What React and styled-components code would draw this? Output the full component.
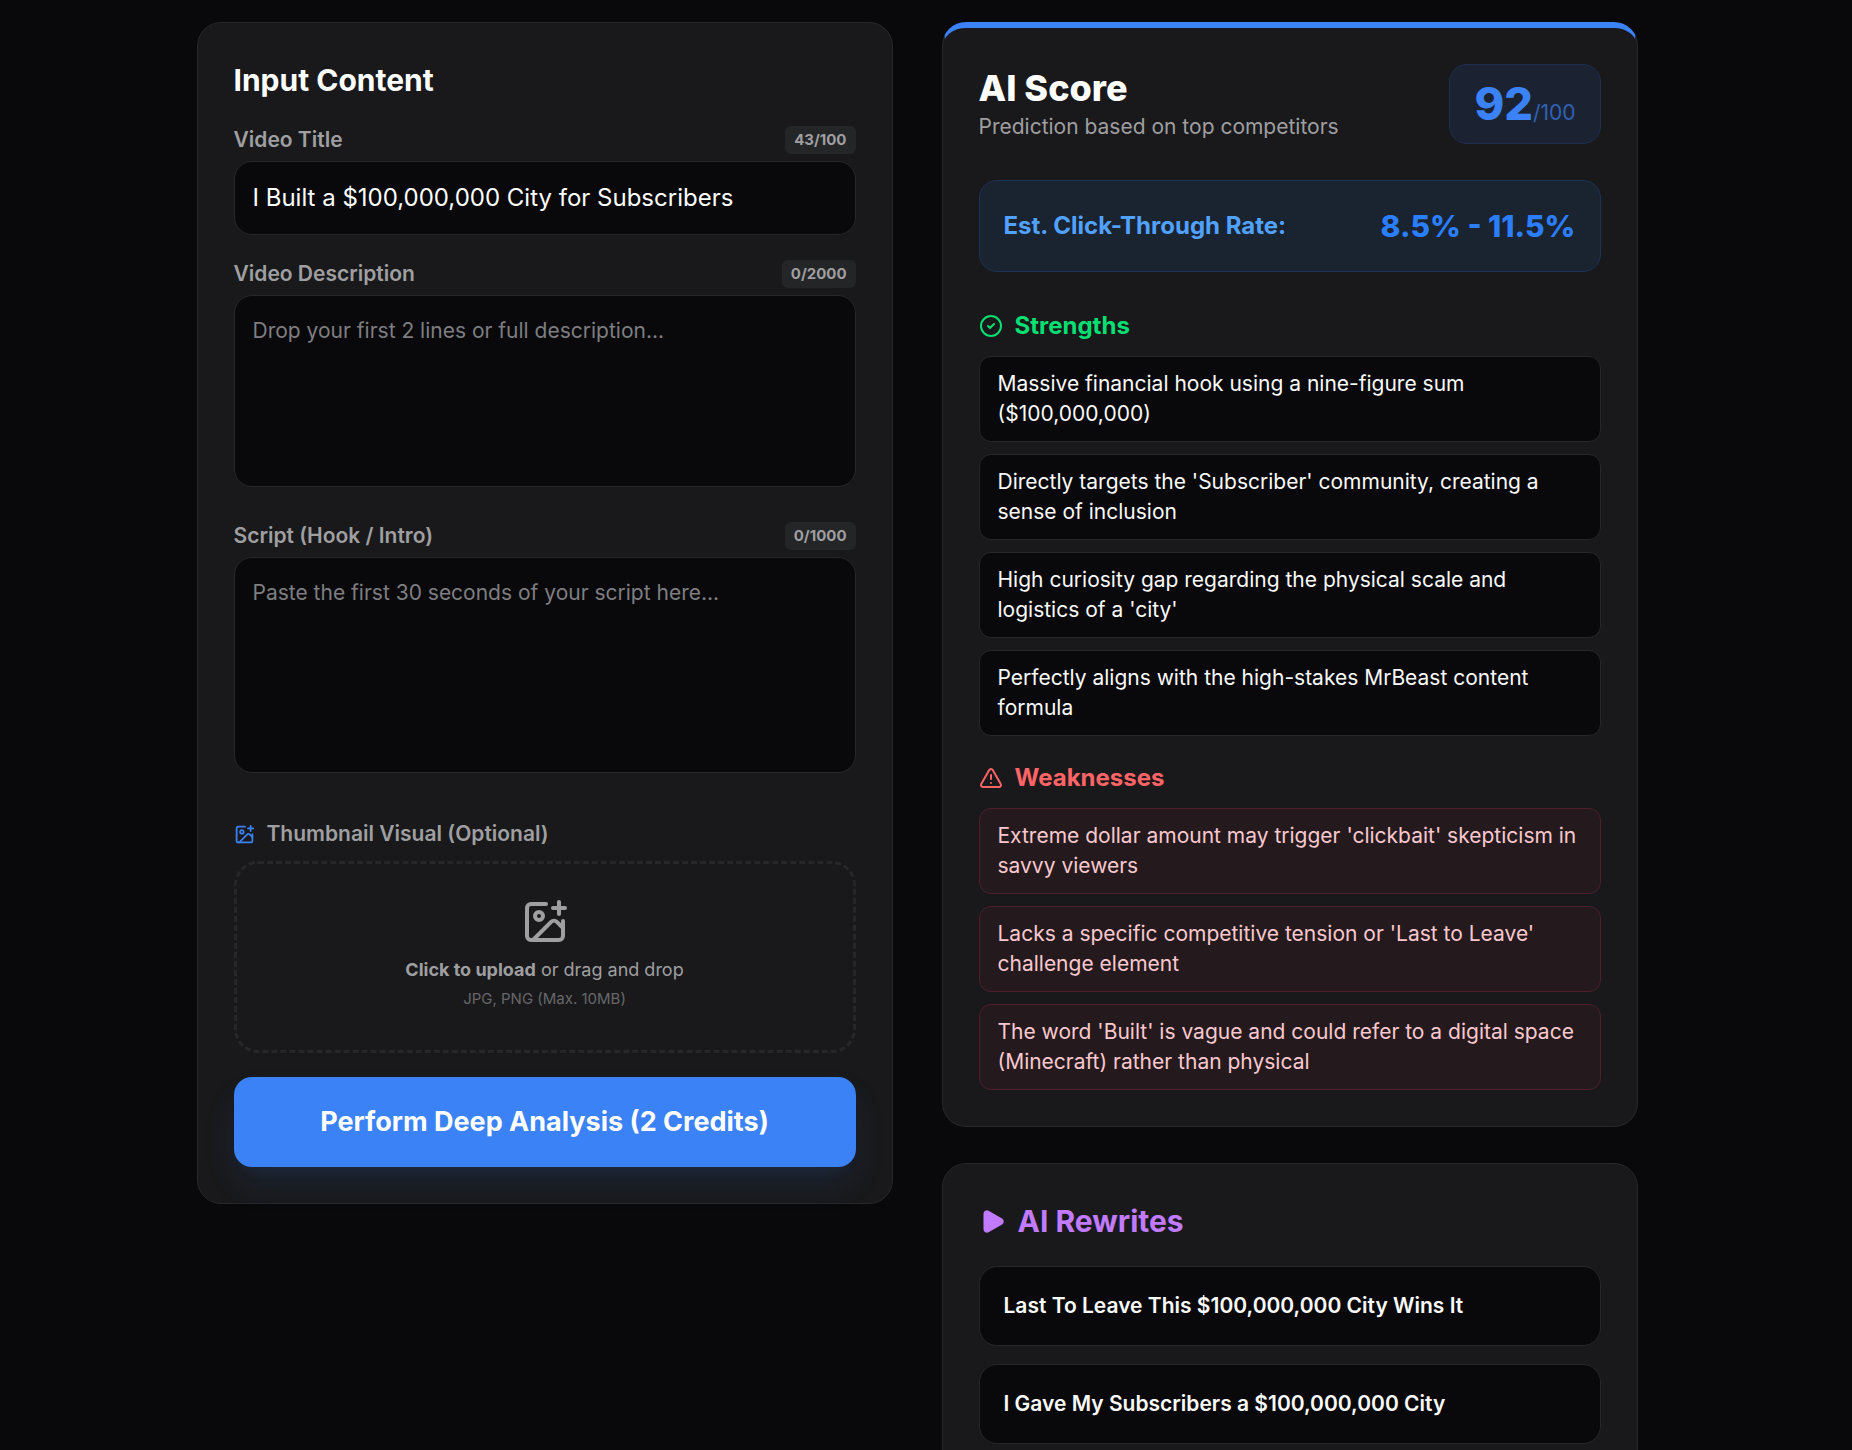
import React, { useState } from "react";
import styled, { createGlobalStyle } from "styled-components";
import { ImagePlus, CircleCheck, TriangleAlert, Play } from "lucide-react";

const Global = createGlobalStyle`
  *, *::before, *::after { box-sizing: border-box; }
  body {
    margin: 0;
    background: #09090b;
    color: #fafafa;
    font-family: Inter, "Liberation Sans", sans-serif;
    font-size: 21px;
    line-height: 30px;
  }
  h1, h2, h3, p, ul { margin: 0; padding: 0; }
  ul { list-style: none; }
  input, textarea, button { font: inherit; }
`;

const Page = styled.main`
  height: 100vh;
  overflow: hidden;
  padding: 22px 18px 0 0;
`;

const Columns = styled.div`
  display: grid;
  grid-template-columns: 1fr 1fr;
  align-items: start;
  gap: 49px;
  max-width: 1441px;
  margin: 0 auto;
`;

const Results = styled.div`
  display: flex;
  flex-direction: column;
  gap: 36px;
`;

const Card = styled.section`
  display: flex;
  flex-direction: column;
  min-width: 0;
  padding: 36px;
  background: #19191b;
  border: 1px solid #27272a;
  border-radius: 24px;
  ${(p) => p.$accent && `border-top: 6px solid ${p.$accent};`}
`;

const CardTitle = styled.h2`
  display: flex;
  align-items: center;
  gap: 12px;
  margin-bottom: 24px;
  font-size: 30px;
  line-height: 42px;
  font-weight: 700;
  color: ${(p) => p.$color || "#ffffff"};
`;

const Field = styled.div`
  display: flex;
  flex-direction: column;
  gap: ${(p) => p.$gap || "6px"};
  margin-bottom: ${(p) => p.$space || "24px"};
`;

const FieldHead = styled.div`
  display: flex;
  align-items: center;
  justify-content: space-between;
`;

const Label = styled.label`
  display: flex;
  align-items: center;
  gap: 12px;
  font-weight: 600;
  color: #9f9fa1;
`;

const Counter = styled.span`
  padding: 3px 9px;
  border-radius: 6px;
  background: #242527;
  color: #9f9fa1;
  font-size: 15px;
  line-height: 22px;
  font-weight: 700;
`;

const TextInput = styled.input`
  width: 100%;
  height: 74px;
  padding: 0 18px 2px;
  background: #09090b;
  border: 1px solid #27272a;
  border-radius: 18px;
  color: #ffffff;
  font-size: 24px;
  outline: none;
`;

const TextArea = styled.textarea`
  display: block;
  width: 100%;
  height: ${(p) => p.$height};
  padding: 20px 18px;
  background: #09090b;
  border: 1px solid #27272a;
  border-radius: 18px;
  color: #ffffff;
  resize: none;
  outline: none;
  &::placeholder { color: #7e7e81; opacity: 1; }
`;

const DropZone = styled.button`
  display: flex;
  flex-direction: column;
  align-items: center;
  width: 100%;
  height: 192px;
  padding: 34px 0 0;
  background: transparent;
  border: 3px dashed #27272a;
  border-radius: 24px;
  color: #9f9fa1;
  cursor: pointer;
`;

const DropText = styled.span`
  margin-top: 10px;
  font-size: 18px;
  line-height: 27px;
`;

const DropHint = styled.span`
  margin-top: 5px;
  font-size: 15px;
  line-height: 22px;
  color: #67676a;
`;

const Submit = styled.button`
  height: 90px;
  border: 0;
  border-radius: 18px;
  background: #3b82f6;
  box-shadow: 0 18px 36px -4px rgba(59, 130, 246, 0.12), 0 12px 15px -9px rgba(59, 130, 246, 0.08);
  color: #ffffff;
  font-size: 27px;
  line-height: 42px;
  font-weight: 700;
  cursor: pointer;
`;

const ScoreHead = styled.header`
  display: flex;
  align-items: center;
  justify-content: space-between;
  margin-bottom: 36px;
`;

const ScoreTitle = styled.h2`
  margin-bottom: 3px;
  font-size: 36px;
  line-height: 42px;
  font-weight: 800;
  color: #ffffff;
`;

const Subtitle = styled.p`
  color: #9f9fa1;
`;

const ScoreBadge = styled.div`
  padding: 12px 24px;
  background: #1b2332;
  border: 1px solid #1e2f52;
  border-radius: 18px;
  color: #3b82f6;
  font-size: 45px;
  line-height: 54px;
  font-weight: 800;
`;

const ScoreMax = styled.span`
  font-size: 21px;
  line-height: 21px;
  font-weight: 400;
  opacity: 0.65;
`;

const RateBox = styled.div`
  display: flex;
  align-items: center;
  justify-content: space-between;
  margin-bottom: 36px;
  padding: 24px;
  background: #1a2330;
  border: 1px solid #1c3358;
  border-radius: 18px;
  line-height: 42px;
`;

const RateLabel = styled.span`
  font-size: 24px;
  font-weight: 700;
  color: #51a2ff;
`;

const RateValue = styled.span`
  font-size: 30px;
  font-weight: 800;
  color: #2b7fff;
`;

const Group = styled.section`
  & + & { margin-top: 24px; }
`;

const GroupTitle = styled.h3`
  display: flex;
  align-items: center;
  gap: 12px;
  margin-bottom: 12px;
  font-size: 24px;
  line-height: 36px;
  font-weight: 700;
  color: ${(p) => p.$color};
`;

const List = styled.ul`
  display: flex;
  flex-direction: column;
  gap: ${(p) => p.$gap || "12px"};
`;

const Point = styled.li`
  padding: 12px 18px;
  background: ${(p) => (p.$warn ? "#241a1d" : "#09090b")};
  border: 1px solid ${(p) => (p.$warn ? "#4e1e2a" : "#27272a")};
  border-radius: 12px;
  color: ${(p) => (p.$warn ? "#fbc8cf" : "#fafafa")};
`;

const Rewrite = styled.li`
  padding: 24px;
  background: #09090b;
  border: 1px solid #27272a;
  border-radius: 18px;
  font-weight: 600;
`;

const strengths = [
  "Massive financial hook using a nine-figure sum ($100,000,000)",
  "Directly targets the 'Subscriber' community, creating a sense of inclusion",
  "High curiosity gap regarding the physical scale and logistics of a 'city'",
  "Perfectly aligns with the high-stakes MrBeast content formula",
];

const weaknesses = [
  "Extreme dollar amount may trigger 'clickbait' skepticism in savvy viewers",
  "Lacks a specific competitive tension or 'Last to Leave' challenge element",
  "The word 'Built' is vague and could refer to a digital space (Minecraft) rather than physical",
];

const rewrites = [
  "Last To Leave This $100,000,000 City Wins It",
  "I Gave My Subscribers a $100,000,000 City",
];

function InputCard() {
  const [title, setTitle] = useState("I Built a $100,000,000 City for Subscribers");
  const [description, setDescription] = useState("");
  const [script, setScript] = useState("");
  return (
    <Card>
      <CardTitle>Input Content</CardTitle>
      <Field>
        <FieldHead>
          <Label htmlFor="title">Video Title</Label>
          <Counter>{title.length}/100</Counter>
        </FieldHead>
        <TextInput id="title" value={title} onChange={(e) => setTitle(e.target.value)} />
      </Field>
      <Field $space="34px">
        <FieldHead>
          <Label htmlFor="description">Video Description</Label>
          <Counter>{description.length}/2000</Counter>
        </FieldHead>
        <TextArea
          id="description"
          $height="192px"
          placeholder="Drop your first 2 lines or full description..."
          value={description}
          onChange={(e) => setDescription(e.target.value)}
        />
      </Field>
      <Field $space="46px">
        <FieldHead>
          <Label htmlFor="script">Script (Hook / Intro)</Label>
          <Counter>{script.length}/1000</Counter>
        </FieldHead>
        <TextArea
          id="script"
          $height="216px"
          placeholder="Paste the first 30 seconds of your script here..."
          value={script}
          onChange={(e) => setScript(e.target.value)}
        />
      </Field>
      <Field $gap="12px">
        <Label htmlFor="thumbnail">
          <ImagePlus size={21} color="#3b82f6" />
          Thumbnail Visual (Optional)
        </Label>
        <DropZone id="thumbnail" type="button">
          <ImagePlus size={48} />
          <DropText>
            <strong>Click to upload</strong> or drag and drop
          </DropText>
          <DropHint>JPG, PNG (Max. 10MB)</DropHint>
        </DropZone>
      </Field>
      <Submit type="button">Perform Deep Analysis (2 Credits)</Submit>
    </Card>
  );
}

export default function App() {
  return (
    <Page>
      <Global />
      <Columns>
        <InputCard />
        <Results>
          <Card $accent="#3b82f6">
            <ScoreHead>
              <div>
                <ScoreTitle>AI Score</ScoreTitle>
                <Subtitle>Prediction based on top competitors</Subtitle>
              </div>
              <ScoreBadge>
                92<ScoreMax>/100</ScoreMax>
              </ScoreBadge>
            </ScoreHead>
            <RateBox>
              <RateLabel>Est. Click-Through Rate:</RateLabel>
              <RateValue>8.5% - 11.5%</RateValue>
            </RateBox>
            <Group>
              <GroupTitle $color="#05df72">
                <CircleCheck size={24} />
                Strengths
              </GroupTitle>
              <List>
                {strengths.map((text) => (
                  <Point key={text}>{text}</Point>
                ))}
              </List>
            </Group>
            <Group>
              <GroupTitle $color="#ff6467">
                <TriangleAlert size={24} />
                Weaknesses
              </GroupTitle>
              <List>
                {weaknesses.map((text) => (
                  <Point $warn key={text}>{text}</Point>
                ))}
              </List>
            </Group>
          </Card>
          <Card>
            <CardTitle $color="#c27aff">
              <Play size={27} fill="currentColor" />
              AI Rewrites
            </CardTitle>
            <List $gap="18px">
              {rewrites.map((text) => (
                <Rewrite key={text}>{text}</Rewrite>
              ))}
            </List>
          </Card>
        </Results>
      </Columns>
    </Page>
  );
}
